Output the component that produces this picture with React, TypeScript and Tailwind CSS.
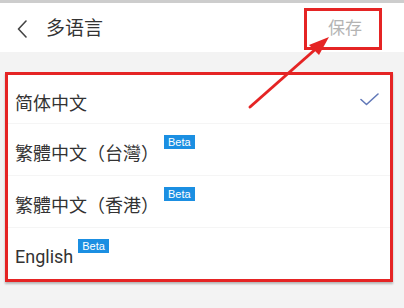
import React from 'react';

type Lang = { label: string; beta?: boolean; selected?: boolean; font: string; h: string; pt: string; badgeMb: string };

const langs: Lang[] = [
  { label: '简体中文', selected: true, font: 'sc', h: 'h-[49px]', pt: 'pt-[8px]', badgeMb: 'mb-[23px]' },
  { label: '繁體中文（台灣）', beta: true, font: 'tc', h: 'h-[52px]', pt: 'pt-[8px]', badgeMb: 'mb-[23px]' },
  { label: '繁體中文（香港）', beta: true, font: 'tc', h: 'h-[52px]', pt: 'pt-[8px]', badgeMb: 'mb-[23px]' },
  { label: 'English', beta: true, font: 'sc', h: 'h-[52px]', pt: 'pt-[4px]', badgeMb: 'mb-[20px]' },
];

const BetaBadge = ({ className }: { className: string }) => (
  <span
    className={`ml-[5px] inline-flex h-[14px] items-center bg-[#1b8fe2] px-[4px] text-[11px] leading-none text-white font-['Liberation_Sans',sans-serif] ${className}`}
  >
    Beta
  </span>
);

const Check = () => (
  <svg width="19" height="13" viewBox="0 0 19 13" fill="none">
    <path d="M1 6.5 L6.5 11.5 L18 1" stroke="#6279b8" strokeWidth="1.6" strokeLinecap="round" strokeLinejoin="round" />
  </svg>
);

const Arrow = () => (
  <svg className="pointer-events-none absolute left-0 top-0" width="404" height="308" viewBox="0 0 404 308">
    <line x1="250" y1="107" x2="318" y2="47" stroke="#e52424" strokeWidth="3" strokeLinecap="round" />
    <polygon points="329,37 309,45 319,55" fill="#e52424" />
  </svg>
);

export default function App() {
  return (
    <div className="relative h-[308px] w-[404px] overflow-hidden bg-[#f3f3f3] font-['Roboto','Noto_Sans_CJK_SC',sans-serif] text-[#333]">
      <div className="h-[3px] bg-[#cdcdcd]" />
      <div className="flex h-[49px] items-start bg-white">
        <div className="flex h-[52px] items-center pl-[17px]">
          <svg width="10" height="18" viewBox="0 0 10 18" fill="none">
            <path d="M9 1 L1.5 9 L9 17" stroke="#444" strokeWidth="1.6" strokeLinecap="round" strokeLinejoin="round" />
          </svg>
          <span className="ml-[19px] text-[19px] text-[#333]">多语言</span>
        </div>
        <div className="ml-auto mr-[22px] mt-[5px] flex h-[42px] w-[78px] items-center justify-center border-[3px] border-[#e52424] pl-[4px]">
          <span className="text-[17px] text-[#b4b4b4]">保存</span>
        </div>
      </div>

      <div className="ml-[5px] mt-[20px] h-[210px] w-[388px] overflow-hidden border-[3px] border-[#e52424] bg-white shadow-[0_2px_2px_rgba(0,0,0,0.25)]">
        {langs.map((l, i) => (
          <div
            key={l.label}
            className={`flex items-center pl-[7px] pr-[11px] ${l.pt} ${l.h} ${i < langs.length - 1 ? 'border-b border-[#f5f5f5]' : ''}`}
          >
            <span
              className={`text-[18px] text-[#333] ${
                l.font === 'tc'
                  ? "font-['Roboto','Noto_Sans_CJK_TC',sans-serif]"
                  : "font-['Roboto','Noto_Sans_CJK_SC',sans-serif]"
              }`}
            >
              {l.label}
            </span>
            {l.beta && <BetaBadge className={l.badgeMb} />}
            {l.selected && (
              <span className="ml-auto mb-[8px]">
                <Check />
              </span>
            )}
          </div>
        ))}
      </div>

      <Arrow />
    </div>
  );
}
